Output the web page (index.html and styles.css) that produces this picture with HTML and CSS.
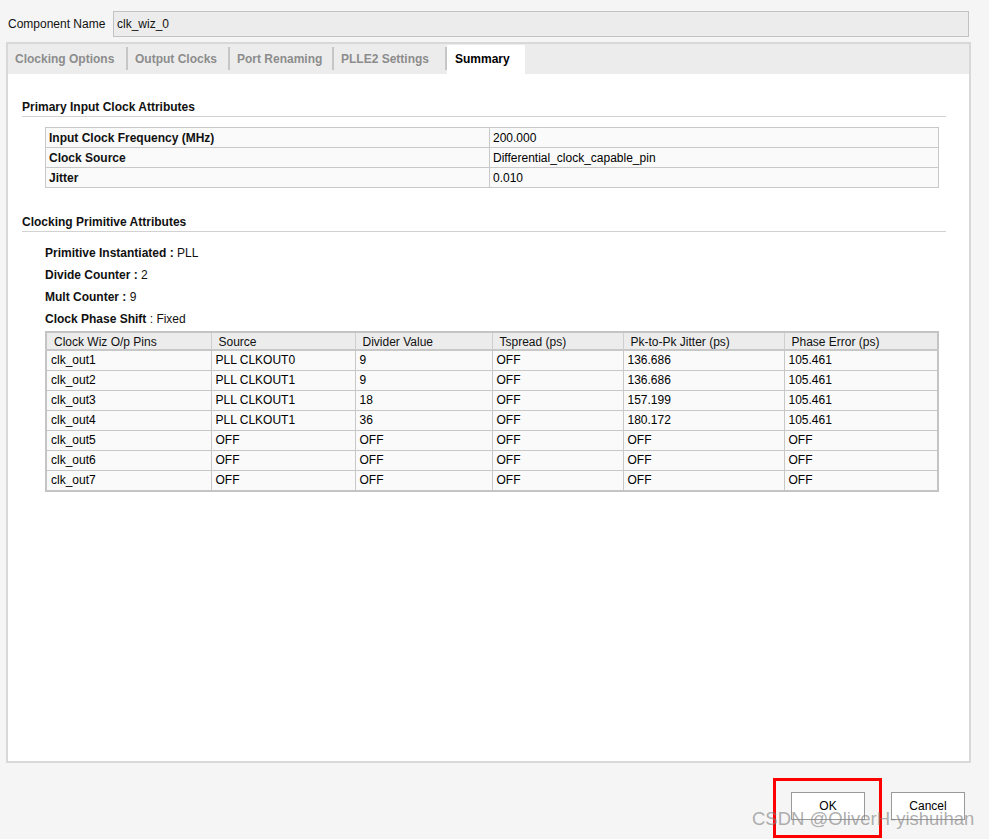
FILE: index.html
```html
<!DOCTYPE html>
<html>
<head>
<meta charset="utf-8">
<link rel="stylesheet" href="styles.css">
</head>
<body>
<div class="top">
  <span class="label">Component Name</span>
  <div class="name-input">clk_wiz_0</div>
</div>
<div class="panel">
  <div class="tabs">
    <div class="tab t1">Clocking Options</div>
    <div class="tab t2">Output Clocks</div>
    <div class="tab t3">Port Renaming</div>
    <div class="tab t4">PLLE2 Settings</div>
    <div class="tab active">Summary</div>
  </div>
  <div class="content">
    <div class="section-title first">Primary Input Clock Attributes</div>
    <table class="attr">
      <colgroup><col class="a1"><col class="a2"></colgroup>
      <tr><td class="b">Input Clock Frequency (MHz)</td><td>200.000</td></tr>
      <tr><td class="b">Clock Source</td><td>Differential_clock_capable_pin</td></tr>
      <tr><td class="b">Jitter</td><td>0.010</td></tr>
    </table>
    <div class="section-title second">Clocking Primitive Attributes</div>
    <div class="props">
      <div><b>Primitive Instantiated :</b> PLL</div>
      <div><b>Divide Counter :</b> 2</div>
      <div><b>Mult Counter :</b> 9</div>
      <div><b>Clock Phase Shift</b> : Fixed</div>
    </div>
    <table class="clk">
      <colgroup>
        <col class="c1"><col class="c2"><col class="c3"><col class="c4"><col class="c5"><col class="c6">
      </colgroup>
      <thead>
        <tr><th>Clock Wiz O/p Pins</th><th>Source</th><th>Divider Value</th><th>Tspread (ps)</th><th>Pk-to-Pk Jitter (ps)</th><th>Phase Error (ps)</th></tr>
      </thead>
      <tbody>
        <tr><td>clk_out1</td><td>PLL CLKOUT0</td><td>9</td><td>OFF</td><td>136.686</td><td>105.461</td></tr>
        <tr><td>clk_out2</td><td>PLL CLKOUT1</td><td>9</td><td>OFF</td><td>136.686</td><td>105.461</td></tr>
        <tr><td>clk_out3</td><td>PLL CLKOUT1</td><td>18</td><td>OFF</td><td>157.199</td><td>105.461</td></tr>
        <tr><td>clk_out4</td><td>PLL CLKOUT1</td><td>36</td><td>OFF</td><td>180.172</td><td>105.461</td></tr>
        <tr><td>clk_out5</td><td>OFF</td><td>OFF</td><td>OFF</td><td>OFF</td><td>OFF</td></tr>
        <tr><td>clk_out6</td><td>OFF</td><td>OFF</td><td>OFF</td><td>OFF</td><td>OFF</td></tr>
        <tr><td>clk_out7</td><td>OFF</td><td>OFF</td><td>OFF</td><td>OFF</td><td>OFF</td></tr>
      </tbody>
    </table>
  </div>
</div>
<div class="footer">
  <div class="ok-wrap">
    <button class="btn">OK</button>
    <div class="highlight"></div>
  </div>
  <button class="btn">Cancel</button>
  <div class="watermark">CSDN @OliverH-yishuihan</div>
</div>
</body>
</html>
```
FILE: styles.css
```css
html, body {
  margin: 0;
  padding: 0;
}
body {
  width: 989px;
  height: 839px;
  overflow: hidden;
  background: #f5f5f5;
  font-family: "Liberation Sans", Arial, sans-serif;
  font-size: 12px;
  color: #000;
  position: relative;
}
.top {
  display: flex;
  align-items: center;
  padding: 11px 20px 0 8px;
  height: 26px;
}
.label {
  width: 105px;
  flex: none;
  color: #111;
}
.name-input {
  flex: 1;
  height: 24px;
  line-height: 24px;
  border: 1px solid #c2c2c2;
  background: #ececec;
  padding-left: 3px;
  color: #111;
}
.panel {
  margin: 5px 18px 0 6px;
  height: 717px;
  border: 2px solid #d8d8d8;
  background: #ffffff;
  display: flex;
  flex-direction: column;
}
.tabs {
  height: 30px;
  background: #ececec;
  display: flex;
  flex: none;
}
.tab {
  height: 30px;
  line-height: 31px;
  font-weight: bold;
  color: #8c8c8c;
  padding-left: 7px;
  box-sizing: border-box;
  position: relative;
}
.tab::after {
  content: "";
  position: absolute;
  right: 0;
  top: 3px;
  bottom: 4px;
  width: 2px;
  background: #c6c6c6;
}
.t1 { width: 120px; }
.t2 { width: 102px; }
.t3 { width: 104px; }
.t4 { width: 113px; }
.tab.active {
  width: 78px;
  background: #ffffff;
  color: #000;
  margin-top: 1px;
  height: 29px;
  line-height: 29px;
  padding-left: 8px;
}
.tab.active::after { display: none; }
.content {
  flex: 1;
  background: #fff;
  padding: 0 23px 0 14px;
}
.section-title {
  font-weight: bold;
  color: #111;
  line-height: 14px;
  padding-bottom: 2px;
  border-bottom: 1px solid #d2d2d2;
}
.section-title.first { margin-top: 26px; }
.section-title.second { margin-top: 27px; }
table {
  border-collapse: collapse;
  table-layout: fixed;
  margin-left: 23px;
}
.attr {
  width: 893px;
  margin-top: 10px;
  border: 1px solid #c8c8c8;
}
.attr td {
  height: 19px;
  padding: 0 0 0 3px;
  border: 1px solid #c8c8c8;
  background: #fafafa;
  line-height: 18px;
  white-space: nowrap;
}
.attr td.b { font-weight: bold; color: #111; }
.a1 { width: 444px; }
.a2 { width: 449px; }
.props {
  padding-left: 23px;
  margin-top: 10px;
}
.props div {
  line-height: 22px;
  height: 22px;
  color: #111;
}
.clk {
  width: 892px;
  border: 2px solid #c4c4c4;
  margin-top: 1px;
}
.clk th {
  height: 14px;
  background: #ececec;
  font-weight: normal;
  text-align: left;
  padding: 2px 0 0 7px;
  border: 1px solid #cfcfcf;
  border-bottom: 2px solid #c8c8c8;
  line-height: 14px;
  color: #111;
  white-space: nowrap;
}
.clk td {
  height: 19px;
  padding: 0 0 0 4px;
  border: 1px solid #c8c8c8;
  background: #fafafa;
  line-height: 19px;
  white-space: nowrap;
}
.c1 { width: 165px; }
.c2 { width: 144px; }
.c3 { width: 137px; }
.c4 { width: 131px; }
.c5 { width: 161px; }
.c6 { width: 154px; }
.footer {
  display: flex;
  justify-content: flex-end;
  gap: 26px;
  padding: 29px 24px 0 0;
}
.ok-wrap {
  position: relative;
}
.btn {
  width: 74px;
  height: 28px;
  border: 1px solid #9a9a9a;
  background: #ffffff;
  font-family: "Liberation Sans", Arial, sans-serif;
  font-size: 12px;
  color: #000;
  padding: 0;
  margin: 0;
}
.highlight {
  position: absolute;
  left: -18px;
  top: -14px;
  width: 103px;
  height: 54px;
  border: 3px solid #ff0000;
}
.watermark {
  position: absolute;
  left: 752px;
  top: 808px;
  font-family: "Liberation Sans", Arial, sans-serif;
  font-size: 18.5px;
  color: rgba(130, 130, 130, 0.65);
  white-space: nowrap;
}
```
